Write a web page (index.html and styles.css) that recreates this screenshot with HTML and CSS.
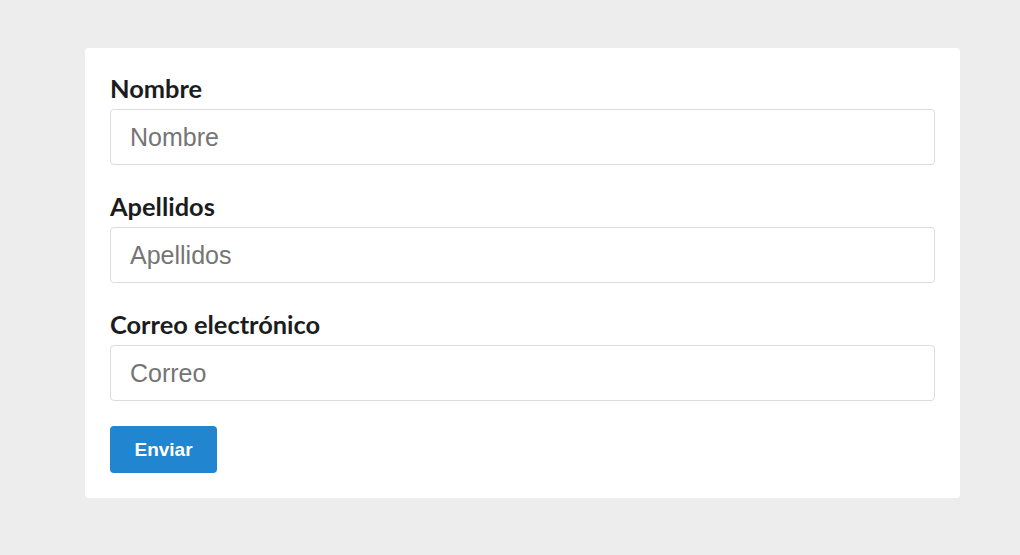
FILE: index.html
```html
<!DOCTYPE html>
<html lang="es">
<head>
<meta charset="utf-8">
<title>Formulario</title>
<link rel="stylesheet" href="styles.css">
</head>
<body>
<form class="card">
  <div class="field">
    <label class="label" for="nombre">Nombre</label>
    <input class="input" id="nombre" type="text" placeholder="Nombre">
  </div>
  <div class="field">
    <label class="label" for="apellidos">Apellidos</label>
    <input class="input" id="apellidos" type="text" placeholder="Apellidos">
  </div>
  <div class="field">
    <label class="label" for="correo">Correo electrónico</label>
    <input class="input" id="correo" type="email" placeholder="Correo">
  </div>
  <button class="button" type="button">Enviar</button>
</form>
</body>
</html>
```
FILE: styles.css
```css
html, body {
  margin: 0;
  padding: 0;
}
body {
  background: #ededed;
  padding: 48px 60px 57px 85px;
  font-family: "Liberation Sans", Arial, sans-serif;
}
.card {
  background: #fff;
  border-radius: 4px;
  padding: 25px;
  display: flex;
  flex-direction: column;
  align-items: flex-start;
}
.field {
  width: 100%;
  display: flex;
  flex-direction: column;
  margin-bottom: 26px;
}
.field:nth-last-of-type(1) {
  margin-bottom: 25px;
}
.label {
  font-family: Lato, "Liberation Sans", sans-serif;
  font-weight: 700;
  font-size: 25.4px;
  line-height: 30px;
  color: #1b1c1d;
  margin-bottom: 6px;
}
.input {
  box-sizing: border-box;
  width: 100%;
  height: 56px;
  border: 1px solid #dcdcdc;
  border-radius: 4px;
  padding: 0 19px;
  font-family: "Liberation Sans", Arial, sans-serif;
  font-size: 25px;
  color: #333;
  background: #fff;
  outline: none;
}
.input::placeholder {
  color: #757575;
  opacity: 1;
}
.button {
  box-sizing: border-box;
  width: 107px;
  height: 47px;
  border: none;
  border-radius: 4px;
  background: #2185d0;
  color: #fff;
  font-family: "Liberation Sans", Arial, sans-serif;
  font-weight: 700;
  font-size: 19px;
  padding: 0;
  cursor: pointer;
}
```
